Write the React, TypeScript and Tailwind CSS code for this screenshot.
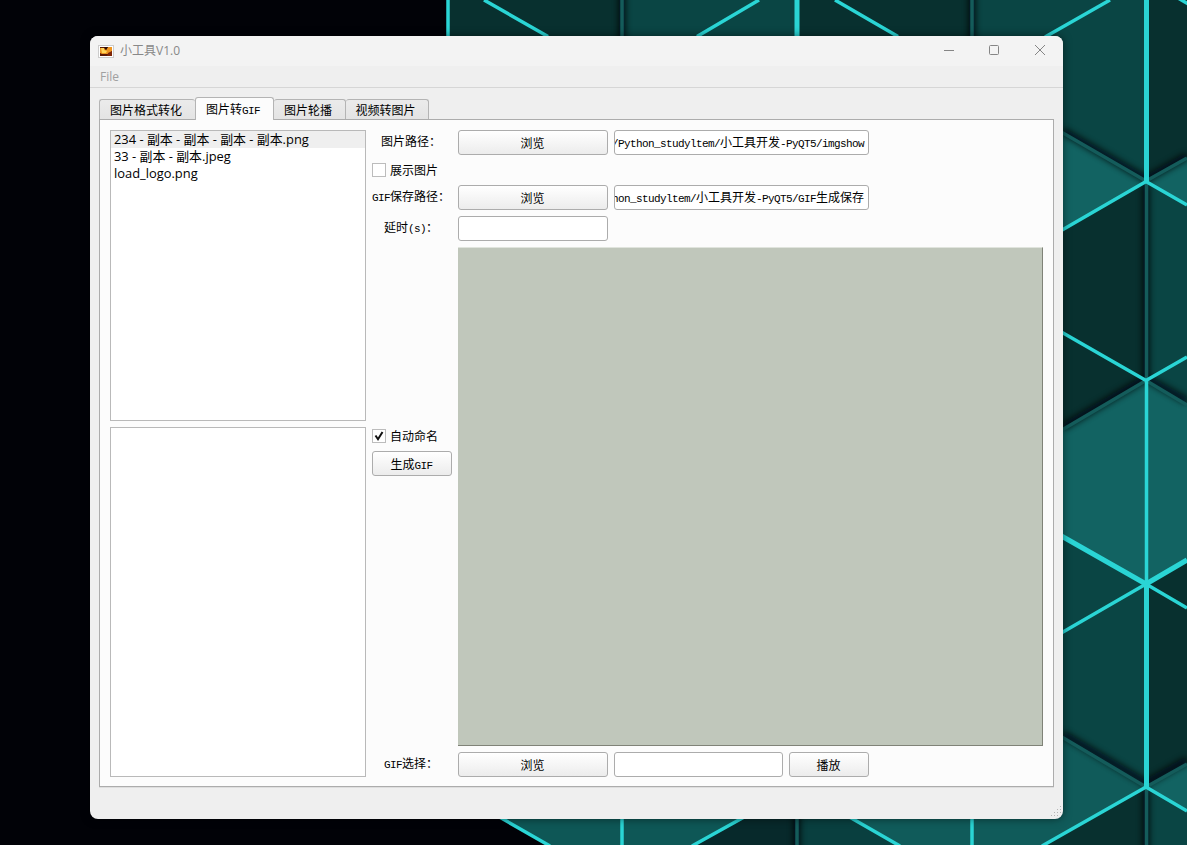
import { useState } from 'react';
import type { ReactNode } from 'react';

const tabs = ['图片格式转化', '图片转GIF', '图片轮播', '视频转图片'];
const tabWidths = ['w-[96px]', 'w-[79px]', 'w-[72px]', 'w-[83px]'];
const files = ['234 - 副本 - 副本 - 副本 - 副本.png', '33 - 副本 - 副本.jpeg', 'load_logo.png'];

// Latin runs are set on a 6px half-width cell, CJK on a 12px one
const CellText = ({ text }: { text: string }) => (
  <span className="whitespace-pre">
    {text.split(/([\x20-\x7e]+)/).map((part, i) =>
      i % 2 === 1 ? (
        <span key={i} className="font-['Liberation_Mono',monospace] text-[11px] tracking-[-0.6px]">
          {part}
        </span>
      ) : (
        part
      )
    )}
  </span>
);

const Button = ({ className, children }: { className: string; children: string }) => (
  <button
    className={`flex h-[25px] items-center justify-center rounded-[3px] border border-[#acacac] bg-linear-to-b from-white to-[#ececec] pr-px pt-[4px] ${className}`}
  >
    <CellText text={children} />
  </button>
);

const Field = ({ className, children }: { className: string; children?: ReactNode }) => (
  <div
    className={`flex h-[25px] items-center justify-end overflow-hidden rounded-[3px] border border-[#acacac] bg-white pr-1 pt-[3px] ${className}`}
  >
    {children}
  </div>
);

const CheckBox = ({ label, initial }: { label: string; initial: boolean }) => {
  const [checked, setChecked] = useState(initial);
  return (
    <button className="flex h-[18px] items-center gap-1" onClick={() => setChecked(!checked)}>
      <span className="flex size-[14px] items-center justify-center border border-[#bcbcbc] bg-white">
        {checked && (
          <svg width="12" height="12" viewBox="0 0 12 12" fill="none" stroke="#111" strokeWidth="2">
            <path d="M2.5 5.5L5 9.2L9.5 2" />
          </svg>
        )}
      </span>
      <span className="pt-[3px]">{label}</span>
    </button>
  );
};

const Label = ({ className, children }: { className: string; children: string }) => (
  <div className={`flex items-center justify-center pr-0.5 ${className}`}>
    <CellText text={children} />
  </div>
);

const Wallpaper = () => (
  <svg className="absolute inset-0" width="1187" height="845" viewBox="0 0 1187 845">
    <defs>
      <filter id="soft" x="-100" y="-100" width="1400" height="1100" filterUnits="userSpaceOnUse">
        <feGaussianBlur stdDeviation="3" />
      </filter>
    </defs>
    <rect width="1187" height="845" fill="#010207" />
    <path d="M448 0H622V60H448Z" fill="#08302f" />
    <path d="M622 0H797V60H622Z" fill="#0a4544" />
    <path d="M797 0H972V60H797Z" fill="#08302f" />
    <path d="M972 0H1146V181L972 80Z" fill="#0a4544" />
    <path d="M1146 0H1187V158L1146 181Z" fill="#08302f" />
    <path d="M1040 120L1146 181L1040 242Z" fill="#126362" />
    <path d="M1146 181L1187 158V205Z" fill="#126362" />
    <path d="M1040 242L1146 181V380L1040 320Z" fill="#08302f" />
    <path d="M1040 320L1146 380L1040 443Z" fill="#08302f" />
    <path d="M1146 181L1187 205V357L1146 380Z" fill="#0a4544" />
    <path d="M1146 380L1187 357V405Z" fill="#0a4544" />
    <path d="M1146 380V584L1040 524V443Z" fill="#126362" />
    <path d="M1146 380L1187 405V560L1146 584Z" fill="#126362" />
    <path d="M1040 524L1146 584V787L1040 725Z" fill="#0a4544" />
    <path d="M1146 584L1187 560V764L1146 787Z" fill="#08302f" />
    <path d="M1040 725L1146 787L1042 845H868L840 811V780H1040Z" fill="#105b5a" />
    <path d="M1146 787L1187 764V811Z" fill="#126362" />
    <path d="M1146 787V845H1042Z" fill="#08302f" />
    <path d="M1146 787L1187 811V845H1146Z" fill="#0a4544" />
    <path d="M488 811H755L693 845H550Z" fill="#0e5756" />
    <path d="M755 811H797V845H693Z" fill="#07292b" />
    <path d="M797 811H840L898 845H797Z" fill="#093f3f" />
    <g stroke="#000609" strokeWidth="7" fill="none" opacity=".8" filter="url(#soft)">
      <path d="M622 -10V60M972 -10V60M1063 131L1146 179L1187 156M1146 185V378M1063 427L1146 378L1187 401M1063 734L1146 783L1187 760M797 800V860M1146 790V860" />
    </g>
    <g stroke="#145c5b" strokeWidth="3.5" fill="none">
      <path d="M622 0V60M972 0V60M1050 125.5L1146 181L1187 158M1146.500 181V380M1050 437L1146 380.500L1187 405M1050 730L1146 787L1187 764M797 811V845M1146.500 787V845" />
    </g>
    <g stroke="#2ad5d5" strokeWidth="3.5" fill="none">
      <path d="M448 0V60M484 0L548 36.500M759 0L697 36.500M835 0L898 36.500M1110 0L1045 37M1178 -2L1190 5" />
      <path d="M1050 237L1146 181.500L1187 205M1050 325.500L1146 380.500L1187 357M1146.500 380V584M1050 639.500L1146 584L1187 608M1042 846L1146 787L1187 811" />
      <path d="M489 811L550 846M622 811V845M755 811L692 846M839 811L900 846M972 811V845" />
    </g>
    <g stroke="#2ad5d5" strokeWidth="5" fill="none">
      <path d="M797 0V60M1146.500 0V182M1146.500 584V787M1050 529.500L1146 584L1187 560" />
    </g>
  </svg>
);

const TitleBar = () => (
  <div className="flex h-[30px] shrink-0 items-center bg-[#f3f3f3] pl-2 font-['Open_Sans','Noto_Sans_CJK_SC',sans-serif] text-[#888]">
    <svg width="16" height="13" viewBox="0 0 16 13">
      <rect x=".5" y=".5" width="15" height="12" fill="#fff" stroke="#ccc" />
      <rect x="2" y="2" width="12" height="9" fill="#5a1a08" />
      <path d="M2 3H6L8 5L10 2H14V6L11 9H4L2 8Z" fill="#ee9420" />
      <path d="M3 3H6V5L9 6L8 8H4Z" fill="#ffd65a" />
      <path d="M6 2H10L8 5Z" fill="#2c0c05" />
      <path d="M10 8L14 6V11H9Z" fill="#7d2608" />
    </svg>
    <span className="ml-1.5 text-[12px]">小工具V1.0</span>
    <svg className="mb-0.5 ml-auto mr-[17px]" width="103" height="12" viewBox="0 0 103 12" fill="none" stroke="#858585">
      <path d="M1 6.500H11" />
      <rect x="46.500" y="1.500" width="9" height="9" rx="1" />
      <path d="M92 1L102 11M102 1L92 11" />
    </svg>
  </div>
);

const App = () => {
  const [activeTab, setActiveTab] = useState(1);
  const [selected, setSelected] = useState(0);

  return (
    <div className="relative h-[845px] w-[1187px] overflow-hidden pl-[90px] pt-9 font-['Liberation_Mono','Noto_Sans_CJK_SC',monospace] text-[12px] leading-4 text-black">
      <Wallpaper />
      <div className="relative flex h-[783px] w-[973px] flex-col overflow-hidden rounded-lg bg-[#efefef] shadow-[0_0_8px_rgba(0,0,0,0.5)]">
        <TitleBar />
        <div className="flex h-[22px] shrink-0 items-center border-b border-[#d6d6d6] pl-2.5 font-['Open_Sans',sans-serif] text-[#a0a0a0]">
          File
        </div>

        <div className="flex h-[31px] shrink-0 items-end pl-[9px]">
          {tabs.map((tab, i) => (
            <button
              key={tab}
              onClick={() => setActiveTab(i)}
              className={`relative flex items-center justify-center rounded-t-[3px] border border-b-0 border-[#b4b4b4] ${tabWidths[i]} ${
                i === activeTab
                  ? 'z-10 -mb-px h-[23px] bg-[#fcfcfc] pr-[3px] pt-[4px]'
                  : 'h-[20px] bg-linear-to-b from-[#ebebeb] to-[#e4e4e4] pr-[3px] pt-[5px]'
              } ${i > 0 && i !== activeTab ? 'border-l-0' : ''} ${i === 0 ? 'border-r-0' : ''}`}
            >
              <CellText text={tab} />
            </button>
          ))}
        </div>

        <div className="ml-[9px] flex h-[668px] w-[955px] shrink-0 gap-1.5 border border-[#acacac] bg-[#fcfcfc] px-2.5 pt-2.5 shadow-[0_1px_0_#dedede]">
          <div className="flex w-[256px] flex-col gap-1.5">
            <ul className="h-[291px] border border-[#b9b9b9] bg-white font-['Open_Sans','Noto_Sans_CJK_SC',sans-serif] text-[12.9px] leading-[17px]">
              {files.map((file, i) => (
                <li
                  key={file}
                  onClick={() => setSelected(i)}
                  className={`h-[17px] whitespace-pre pl-[3px] ${i === selected ? 'bg-[#efefef]' : ''}`}
                >
                  {file}
                </li>
              ))}
            </ul>
            <div className="h-[350px] border border-[#b9b9b9] bg-white" />
          </div>

          <div className="flex w-20 flex-col">
            <Label className="h-[25px]">图片路径：</Label>
            <div className="mt-1.5">
              <CheckBox label="展示图片" initial={false} />
            </div>
            <Label className="mt-1.5 h-[25px]">GIF保存路径：</Label>
            <Label className="mt-1.5 h-[25px]">延时(s)：</Label>
            <div className="mt-[186px]">
              <CheckBox label="自动命名" initial />
            </div>
            <Button className="mt-1.5 w-20">生成GIF</Button>
            <Label className="mt-[276px] h-[25px]">GIF选择：</Label>
          </div>

          <div className="flex w-[585px] flex-col">
            <div className="flex gap-1.5">
              <Button className="w-[150px]">浏览</Button>
              <Field className="w-[255px]">
                <CellText text="/Python_studyltem/小工具开发-PyQT5/imgshow" />
              </Field>
            </div>
            <div className="mt-[30px] flex gap-1.5">
              <Button className="w-[150px]">浏览</Button>
              <Field className="w-[255px]">
                <CellText text="hon_studyltem/小工具开发-PyQT5/GIF生成保存" />
              </Field>
            </div>
            <Field className="mt-1.5 w-[150px]" />
            <div className="mt-1.5 h-[499px] border-b border-r border-t border-b-[#808378] border-r-[#808378] border-t-[#e0e4dd] bg-[#c0c7bb]" />
            <div className="mt-1.5 flex gap-1.5">
              <Button className="w-[150px]">浏览</Button>
              <Field className="w-[169px]" />
              <Button className="w-20">播放</Button>
            </div>
          </div>
        </div>

        {/* resize grip */}
        <svg className="absolute bottom-0 right-0" width="14" height="14" viewBox="0 0 14 14" fill="#b5b5b5">
          <path d="M11 1h1v1h-1zM8 4h1v1h-1zM11 4h1v1h-1zM5 7h1v1h-1zM8 7h1v1h-1zM11 7h1v1h-1zM2 10h1v1h-1zM5 10h1v1h-1zM8 10h1v1h-1z" />
        </svg>
      </div>
    </div>
  );
};

export default App;
